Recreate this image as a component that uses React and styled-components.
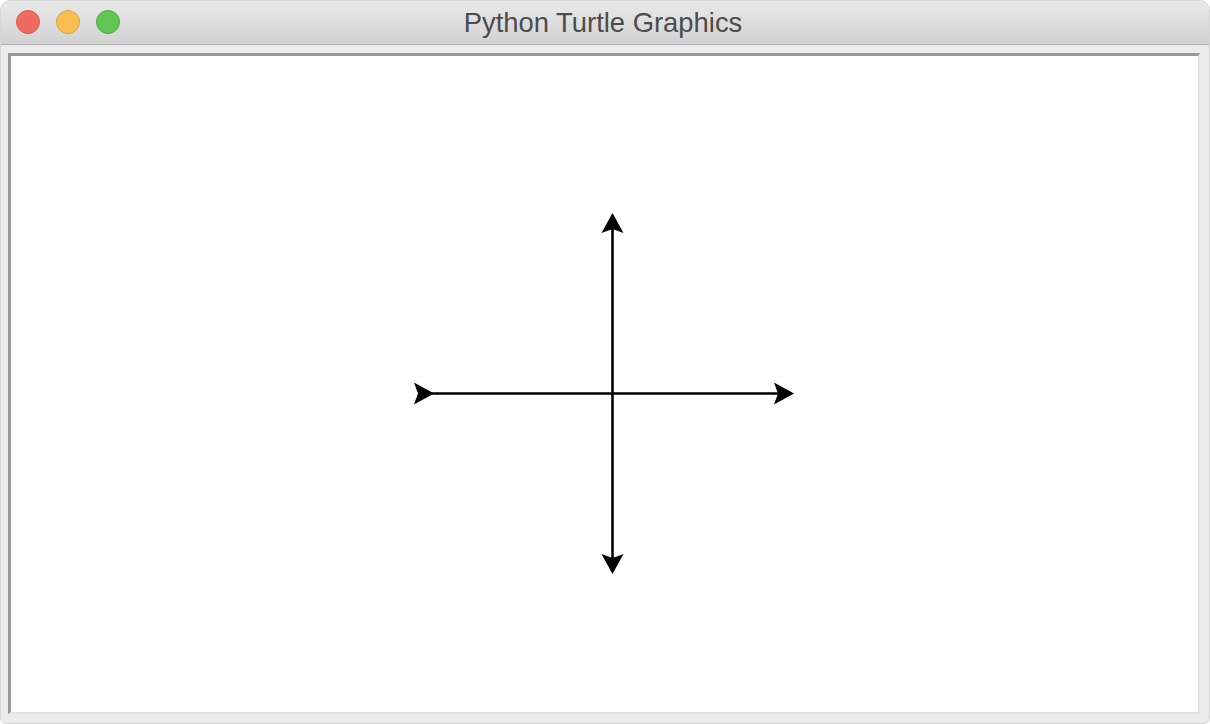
import React from "react";
import styled, { createGlobalStyle } from "styled-components";

const GlobalStyle = createGlobalStyle`
  html, body {
    margin: 0;
    padding: 0;
    background: #ffffff;
  }
  #root {
    width: 1210px;
    height: 724px;
  }
`;

const WindowStyle = styled.div`
  width: 1210px;
  height: 724px;
  display: flex;
  flex-direction: column;
  background-color: #ececec;
  border-radius: 10px 10px 6px 6px;
  overflow: hidden;
  box-sizing: border-box;
  border: 1px solid #d6d6d6;
`;

const TitleBarStyle = styled.div`
  height: 43px;
  flex: none;
  position: relative;
  display: flex;
  align-items: center;
  justify-content: center;
  background: linear-gradient(to bottom, #e9e9e9, #d2d2d2);
  border-bottom: 1px solid #b1b1b1;
`;

const LightsStyle = styled.div`
  position: absolute;
  left: 15px;
  top: 9px;
  display: flex;
  gap: 16px;
`;

const LightStyle = styled.span`
  width: 22px;
  height: 22px;
  border-radius: 50%;
  background-color: ${(p) => p.fill};
  border: 1px solid ${(p) => p.edge};
`;

const TitleStyle = styled.h1`
  margin: 0 4px 0 0;
  font-family: "Liberation Sans", Arial, sans-serif;
  font-weight: normal;
  font-size: 27.4px;
  color: #4c4c4c;
`;

const BodyStyle = styled.div`
  flex: 1;
  display: flex;
  padding: 8px 9px 10px 7px;
`;

const CanvasStyle = styled.div`
  flex: 1;
  display: flex;
  background-color: #ffffff;
  border-style: solid;
  border-width: 3px 2px 2px 3px;
  border-color: #999999 #e2e2e2 #e2e2e2 #999999;
`;

const heads = [
  "783,337.5 763,326.5 767,337.5 763,348.5",
  "423,337.5 403,326.5 407,337.5 403,348.5",
  "601.5,157 590.5,177 601.5,173 612.5,177",
  "601.5,518 590.5,498 601.5,502 612.5,498",
];

function Drawing() {
  return (
    <svg width="1187" height="656" viewBox="0 0 1187 656">
      <line x1="410" y1="337.5" x2="780" y2="337.5" stroke="#000" strokeWidth="2.6" />
      <line x1="601.5" y1="160" x2="601.5" y2="515" stroke="#000" strokeWidth="2.6" />
      {heads.map((pts) => (
        <polygon key={pts} points={pts} fill="#000" />
      ))}
    </svg>
  );
}

export default function App() {
  return (
    <>
      <GlobalStyle />
      <WindowStyle>
        <TitleBarStyle>
          <LightsStyle>
            <LightStyle fill="#ee6b5f" edge="#d6574b" />
            <LightStyle fill="#f6be50" edge="#dba442" />
            <LightStyle fill="#62c655" edge="#4fab43" />
          </LightsStyle>
          <TitleStyle>Python Turtle Graphics</TitleStyle>
        </TitleBarStyle>
        <BodyStyle>
          <CanvasStyle>
            <Drawing />
          </CanvasStyle>
        </BodyStyle>
      </WindowStyle>
    </>
  );
}
